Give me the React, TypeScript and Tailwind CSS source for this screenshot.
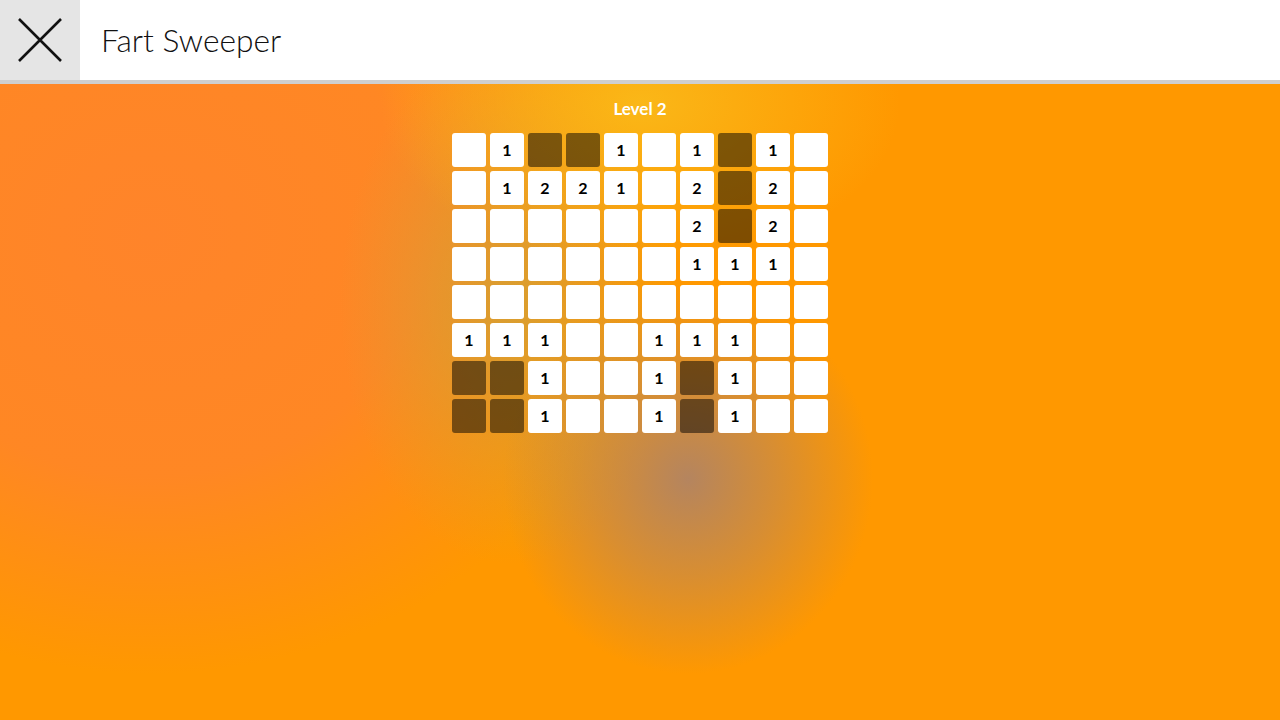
import React from "react";

const D = "D";
const rows: string[][] = [
  ["", "1", D, D, "1", "", "1", D, "1", ""],
  ["", "1", "2", "2", "1", "", "2", D, "2", ""],
  ["", "", "", "", "", "", "2", D, "2", ""],
  ["", "", "", "", "", "", "1", "1", "1", ""],
  ["", "", "", "", "", "", "", "", "", ""],
  ["1", "1", "1", "", "", "1", "1", "1", "", ""],
  [D, D, "1", "", "", "1", D, "1", "", ""],
  [D, D, "1", "", "", "1", D, "1", "", ""],
];

export default function App() {
  return (
    <div className="flex h-[720px] w-[1280px] flex-col overflow-hidden font-['Lato','Liberation_Sans',sans-serif]">
      <header className="flex h-[84px] shrink-0 items-stretch border-b-4 border-[#cfcfcf] bg-white">
        <button className="flex w-[80px] items-center justify-center bg-[#e5e5e5]">
          <svg width="44" height="44" viewBox="0 0 44 44">
            <path d="M1 1 L43 43 M43 1 L1 43" stroke="#111" strokeWidth="2.6" fill="none" />
          </svg>
        </button>
        <h1 className="ml-[21px] flex items-center pt-[1px] text-[31.7px] font-light text-[#111]">
          Fart Sweeper
        </h1>
      </header>
      <main className="flex flex-1 flex-col items-center bg-[#ff9800] bg-[radial-gradient(ellipse_260px_160px_at_640px_20px,rgba(250,185,25,0.95),rgba(250,185,25,0)_100%),radial-gradient(ellipse_185px_195px_at_688px_395px,rgba(178,132,98,0.97),rgba(178,132,98,0.5)_50%,rgba(178,132,98,0)_100%),radial-gradient(ellipse_170px_260px_at_510px_220px,rgba(200,165,60,0.7),rgba(200,165,60,0)_100%),radial-gradient(ellipse_500px_440px_at_150px_150px,rgba(255,132,42,1),rgba(255,132,42,0.85)_55%,rgba(255,132,42,0)_100%)] pt-3">
        <div className="mb-[13px] mt-[1px] text-[17px] font-bold leading-6 text-white">Level 2</div>
        <div className="-mt-[1px] grid grid-cols-[repeat(10,34px)] gap-[4px]">
          {rows.flat().map((c, i) =>
            c === D ? (
              <div key={i} className="h-[34px] w-[34px] rounded-[3px] bg-black/50" />
            ) : (
              <div
                key={i}
                className="flex h-[34px] w-[34px] items-center justify-center rounded-[3px] bg-white text-[16px] font-bold text-black"
              >
                {c}
              </div>
            )
          )}
        </div>
      </main>
    </div>
  );
}
